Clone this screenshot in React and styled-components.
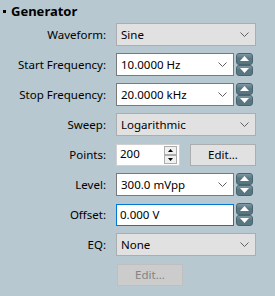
import React from "react";
import styled, { createGlobalStyle } from "styled-components";

const Global = createGlobalStyle`
  html, body { margin: 0; padding: 0; background: #b7c8d0; }
  body { font-family: "Noto Sans", "Open Sans", Arial, sans-serif; font-size: 11.5px; color: #000; }
`;

const Panel = styled.div`
  width: 275px;
  height: 296px;
  background: #b7c8d0;
  box-sizing: border-box;
  padding: 2px 0 0 0;
`;

const Title = styled.div`
  display: flex;
  align-items: center;
  gap: 4px;
  height: 18px;
  padding-left: 3px;
  font-weight: bold;
  font-size: 13px;
  margin-bottom: 3px;
`;

const Bullet = styled.span`
  width: 3px;
  height: 3px;
  background: #000;
  display: inline-block;
  margin-right: 1px;
`;

const Grid = styled.div`
  display: grid;
  grid-template-columns: 106px auto;
  column-gap: 10px;
  row-gap: 7px;
  grid-auto-rows: 23px;
  align-items: center;
`;

const Label = styled.div`
  text-align: right;
  white-space: nowrap;
  line-height: 23px;
`;

const Cell = styled.div`
  display: flex;
  align-items: center;
  gap: 2px;
  height: 23px;
`;

const Combo = styled.div`
  box-sizing: border-box;
  width: ${p => p.$w || 140}px;
  height: 23px;
  display: flex;
  align-items: center;
  justify-content: space-between;
  padding: 0 6px 0 4px;
  background: ${p => (p.$edit ? "#ffffff" : "#e1e1e1")};
  border: 1px solid ${p => (p.$edit ? "#7a7a7a" : "#adadad")};
`;

const TextBox = styled.div`
  box-sizing: border-box;
  width: ${p => p.$w || 118}px;
  height: 22px;
  display: flex;
  align-items: center;
  padding: 0 3px;
  background: #fff;
  border: 1px solid ${p => (p.$focus ? "#0078d7" : "#7a7a7a")};
`;

const Chevron = () => (
  <svg width="9" height="5" viewBox="0 0 9 5">
    <path d="M0.5 0.5 L4.5 4.5 L8.5 0.5" fill="none" stroke="#606060" strokeWidth="1" />
  </svg>
);

const Spinner = styled.div`
  display: flex;
  flex-direction: column;
  width: 17px;
  height: 23px;
`;

const SpinBtn = styled.div`
  box-sizing: border-box;
  height: 11.5px;
  border: 1px solid #48656f;
  border-radius: 3px;
  background: linear-gradient(#7f99a5, #587682 45%, #587682);
  display: flex;
  align-items: center;
  justify-content: center;
`;

const Tri = ({ up, color = "#fff", w = 9, h = 5 }) => (
  <svg width={w} height={h} viewBox={`0 0 ${w} ${h}`}>
    <polygon
      points={up ? `0,${h} ${w / 2},0 ${w},${h}` : `0,0 ${w},0 ${w / 2},${h}`}
      fill={color}
    />
  </svg>
);

const BigSpin = () => (
  <Spinner>
    <SpinBtn><Tri up /></SpinBtn>
    <SpinBtn><Tri /></SpinBtn>
  </Spinner>
);

const NumBox = styled.div`
  box-sizing: border-box;
  width: 64px;
  height: 22px;
  display: flex;
  align-items: flex-start;
  justify-content: space-between;
  padding: 1px 2px 0 3px;
  background: #fff;
  border: 1px solid #d0d0d0;
`;

const MiniSpin = styled.div`
  display: flex;
  flex-direction: column;
  width: 13px;
  height: 18px;
`;

const MiniBtn = styled.div`
  box-sizing: border-box;
  height: 9px;
  border: 1px solid #adadad;
  background: #f0f0f0;
  display: flex;
  align-items: center;
  justify-content: center;
`;

const Button = styled.div`
  box-sizing: border-box;
  width: 66px;
  height: 22px;
  display: flex;
  align-items: center;
  justify-content: center;
  margin-left: ${p => p.$ml || 0}px;
  background: ${p => (p.$disabled ? "#cccccc" : "#e1e1e1")};
  border: 1px solid ${p => (p.$disabled ? "#bfbfbf" : "#adadad")};
  color: ${p => (p.$disabled ? "#838383" : "#000")};
`;

const Value = styled.span`
  white-space: nowrap;
`;

const ComboRow = ({ value, edit, w }) => (
  <Combo $edit={edit} $w={w}>
    <Value>{value}</Value>
    <Chevron />
  </Combo>
);

export default function App() {
  return (
    <Panel>
      <Global />
      <Title><Bullet />Generator</Title>
      <Grid>
        <Label>Waveform:</Label>
        <Cell><ComboRow value="Sine" /></Cell>

        <Label>Start Frequency:</Label>
        <Cell><ComboRow value="10.0000 Hz" edit w={118} /><BigSpin /></Cell>

        <Label>Stop Frequency:</Label>
        <Cell><ComboRow value="20.0000 kHz" edit w={118} /><BigSpin /></Cell>

        <Label>Sweep:</Label>
        <Cell><ComboRow value="Logarithmic" /></Cell>

        <Label>Points:</Label>
        <Cell>
          <NumBox>
            <Value>200</Value>
            <MiniSpin>
              <MiniBtn><Tri up color="#000" w={5} h={3} /></MiniBtn>
              <MiniBtn><Tri color="#000" w={5} h={3} /></MiniBtn>
            </MiniSpin>
          </NumBox>
          <Button $ml={8}>Edit...</Button>
        </Cell>

        <Label>Level:</Label>
        <Cell><ComboRow value="300.0 mVpp" edit w={118} /><BigSpin /></Cell>

        <Label>Offset:</Label>
        <Cell><TextBox $focus><Value>0.000 V</Value></TextBox><BigSpin /></Cell>

        <Label>EQ:</Label>
        <Cell><ComboRow value="None" /></Cell>

        <span />
        <Cell><Button $disabled $ml={1}>Edit...</Button></Cell>
      </Grid>
    </Panel>
  );
}
